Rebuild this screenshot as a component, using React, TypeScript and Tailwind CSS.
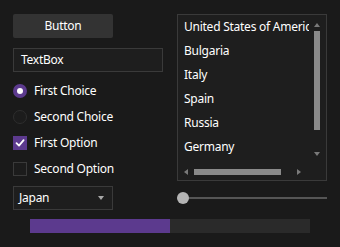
import React from 'react';

const countries = ['United States of America', 'Bulgaria', 'Italy', 'Spain', 'Russia', 'Germany'];

function Radio({ checked, label }: { checked?: boolean; label: string }) {
  return (
    <div className="flex h-[26px] items-center gap-[7px]">
      {checked ? (
        <div className="flex h-[14px] w-[14px] items-center justify-center rounded-full bg-[#5c3a8e]">
          <div className="h-[6px] w-[6px] rounded-full bg-white" />
        </div>
      ) : (
        <div className="h-[14px] w-[14px] rounded-full border border-[#2e2e2e] bg-[#1c1c1c]" />
      )}
      <span>{label}</span>
    </div>
  );
}

function Check({ checked, label }: { checked?: boolean; label: string }) {
  return (
    <div className="flex h-[26px] items-center gap-[7px]">
      {checked ? (
        <div className="flex h-[14px] w-[14px] items-center justify-center bg-[#5c3a8e]">
          <svg width="10" height="10" viewBox="0 0 10 10" fill="none">
            <path d="M1.5 5.2 L4 7.6 L8.6 2.2" stroke="white" strokeWidth="1.8" strokeLinecap="round" strokeLinejoin="round" />
          </svg>
        </div>
      ) : (
        <div className="h-[14px] w-[14px] border border-[#3a3a3a] bg-[#1c1c1c]" />
      )}
      <span>{label}</span>
    </div>
  );
}

export default function App() {
  return (
    <div
      className="h-[247px] w-[340px] overflow-hidden bg-[#1a1a1a] pt-[14px] text-[12px] tracking-[-0.25px] text-white"
      style={{ fontFamily: '"Noto Sans", "Open Sans", sans-serif' }}
    >
      <div className="flex">
        {/* left column */}
        <div className="ml-[13px] flex w-[150px] flex-col">
          <button className="flex h-[24px] w-[100px] items-center justify-center rounded-[2px] bg-[#333333] text-white">
            Button
          </button>
          <div className="mt-[10px] flex h-[24px] w-[150px] items-center border border-[#3a3a3a] bg-[#1e1e1e] px-[7px]">
            TextBox
          </div>
          <div className="mt-[6px] flex flex-col">
            <Radio checked label="First Choice" />
            <Radio label="Second Choice" />
            <Check checked label="First Option" />
            <Check label="Second Option" />
          </div>
          <div className="mt-[4px] flex h-[24px] w-[100px] items-center justify-between border border-[#3a3a3a] bg-[#1e1e1e] pl-[5px] pr-[8px]">
            <span>Japan</span>
            <svg width="6" height="4" viewBox="0 0 6 4">
              <path d="M0 0 H6 L3 4 Z" fill="#a8a8a8" />
            </svg>
          </div>
        </div>

        {/* right column */}
        <div className="ml-[14px] flex w-[150px] flex-col">
          <div className="relative h-[167px] w-[150px] border border-[#3a3a3a] bg-[#1e1e1e]">
            <div className="ml-[6px] w-[125px] overflow-hidden whitespace-nowrap">
              {countries.map((c) => (
                <div key={c} className="flex h-[24px] items-center">
                  {c}
                </div>
              ))}
            </div>
            {/* vertical scrollbar */}
            <div className="absolute right-[6px] top-[8px] flex w-[6px] flex-col items-center">
              <svg width="6" height="4" viewBox="0 0 6 4">
                <path d="M0 4 H6 L3 0 Z" fill="#7a7a7a" />
              </svg>
              <div className="mt-[4px] h-[99px] w-[6px] bg-[#8a8a8a]" />
              <svg className="mt-[22px]" width="6" height="4" viewBox="0 0 6 4">
                <path d="M0 0 H6 L3 4 Z" fill="#7a7a7a" />
              </svg>
            </div>
            {/* horizontal scrollbar */}
            <div className="absolute left-[6px] top-[154px] flex h-[6px] items-center">
              <svg width="4" height="6" viewBox="0 0 4 6">
                <path d="M4 0 V6 L0 3 Z" fill="#7a7a7a" />
              </svg>
              <div className="ml-[6px] h-[6px] w-[87px] bg-[#8a8a8a]" />
              <svg className="ml-[16px]" width="4" height="6" viewBox="0 0 4 6">
                <path d="M0 0 V6 L4 3 Z" fill="#7a7a7a" />
              </svg>
            </div>
          </div>
          {/* slider */}
          <div className="relative mt-[11px] flex h-[12px] items-center">
            <div className="h-[2px] w-full bg-[#555555]" />
            <div className="absolute left-0 top-0 h-[12px] w-[12px] rounded-full bg-[#b4b4b4]" />
          </div>
        </div>
      </div>

      {/* progress bar */}
      <div className="ml-[30px] mt-[9px] flex h-[14px] w-[280px] bg-[#2a2a2a]">
        <div className="h-full w-[140px] bg-[#5c3a8e]" />
      </div>
    </div>
  );
}
